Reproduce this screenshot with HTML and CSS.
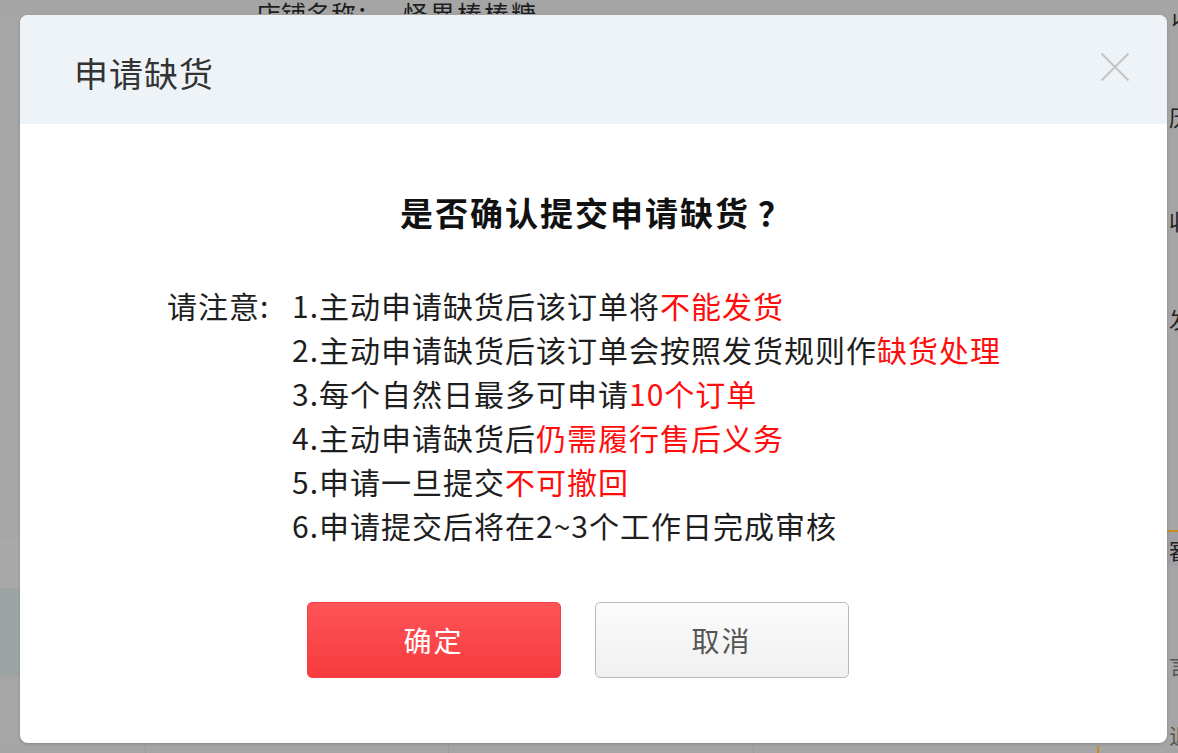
FILE: index.html
```html
<!DOCTYPE html>
<html lang="zh-CN">
<head>
<meta charset="utf-8">
<title>申请缺货</title>
<link rel="stylesheet" href="styles.css">
</head>
<body>
<div class="page">
  <div class="page-top"><span class="shop-label">店铺名称：</span><span class="shop-name">怪異棒棒糖</span></div>
  <div class="page-mid">
    <div class="side-left">
      <div class="sl-a"></div>
      <div class="sl-b"></div>
      <div class="sl-c"></div>
      <div class="sl-d"></div>
    </div>
    <div class="page-fill"></div>
    <div class="side-right">
      <div class="sr-char sr-1">订</div>
      <div class="sr-char sr-2">历</div>
      <div class="sr-char sr-3">收</div>
      <div class="sr-char sr-4">发</div>
      <div class="sr-tab">審</div>
      <div class="sr-char sr-5">言</div>
      <div class="sr-char sr-6">退</div>
    </div>
  </div>
  <div class="page-bottom">
    <div class="pb-cell pb-1"></div>
    <div class="pb-cell pb-2"></div>
    <div class="pb-cell pb-3"></div>
    <div class="pb-cell pb-4"></div>
    <div class="pb-cell pb-5"></div>
  </div>
</div>

<div class="dialog">
  <div class="dialog-header">
    <div class="dialog-title">申请缺货</div>
    <svg class="dialog-close" width="30" height="30" viewBox="0 0 30 30" aria-label="关闭">
      <line x1="1.5" y1="1.5" x2="28.5" y2="28.5" stroke="#c3c3c3" stroke-width="2"/>
      <line x1="28.5" y1="1.5" x2="1.5" y2="28.5" stroke="#c3c3c3" stroke-width="2"/>
    </svg>
  </div>
  <div class="dialog-body">
    <div class="question">是否确认提交申请缺货<span class="qmark">？</span></div>
    <div class="notes">
      <div class="notes-label">请注意:</div>
      <div class="notes-list">
        <div class="note">1.主动申请缺货后该订单将<span class="hl">不能发货</span></div>
        <div class="note">2.主动申请缺货后该订单会按照发货规则作<span class="hl">缺货处理</span></div>
        <div class="note">3.每个自然日最多可申请<span class="hl">10个订单</span></div>
        <div class="note">4.主动申请缺货后<span class="hl">仍需履行售后义务</span></div>
        <div class="note">5.申请一旦提交<span class="hl">不可撤回</span></div>
        <div class="note">6.申请提交后将在2~3个工作日完成审核</div>
      </div>
    </div>
    <div class="actions">
      <button class="btn btn-primary" type="button">确定</button>
      <button class="btn btn-default" type="button">取消</button>
    </div>
  </div>
</div>
</body>
</html>
```
FILE: styles.css
```css
* { box-sizing: border-box; }

html, body {
  margin: 0;
  padding: 0;
  width: 1178px;
  height: 753px;
  overflow: hidden;
  background: #a5a5a5;
  font-family: "Noto Sans CJK SC", "Noto Sans", sans-serif;
}

/* ---------- page behind the overlay ---------- */
.page {
  width: 1178px;
  height: 753px;
  display: flex;
  flex-direction: column;
  background: #a5a5a5;
  color: #1e1e1e;
}

.page-top {
  height: 14px;
  overflow: hidden;
  display: flex;
  align-items: flex-end;
  padding-left: 256px;
  font-size: 25px;
  line-height: 25px;
  flex-shrink: 0;
}
.page-top span { display: block; margin-bottom: -12px; }
.shop-name { margin-left: 22px; letter-spacing: 2px; }

.page-mid {
  flex: 1;
  display: flex;
}

.side-left {
  width: 20px;
  display: flex;
  flex-direction: column;
}
.sl-a { height: 524px; background: #a6a6a6; }
.sl-b { height: 50px; background: #a9a9a9; }
.sl-c { height: 89px; background: #9ca4a4; }
.sl-d { flex: 1; background: #a6a6a6; }

.page-fill { flex: 1; }

.side-right {
  width: 12px;
  overflow: hidden;
  display: flex;
  flex-direction: column;
  padding-left: 3px;
  font-size: 22px;
  line-height: 24px;
  color: #222;
}
.sr-char { height: 24px; }
.sr-1 { margin-top: -12px; }
.sr-2 { margin-top: 78px; }
.sr-3 { margin-top: 80px; }
.sr-4 { margin-top: 74px; }
.sr-tab {
  margin-top: 200px;
  margin-left: -3px;
  padding-left: 3px;
  height: 36px;
  border-top: 2px solid #c98a22;
  background: #9fa0a6;
  line-height: 34px;
}
.sr-5 { margin-top: 86px; color: #555; }
.sr-6 { margin-top: 46px; color: #555; }

.page-bottom {
  height: 10px;
  display: flex;
  flex-shrink: 0;
  background: #a5a5a5;
}
.pb-cell { border-right: 1px solid #9a9a9a; }
.pb-1 { width: 146px; }
.pb-2 { width: 303px; }
.pb-3 { width: 305px; }
.pb-4 { width: 345px; border-right: 2px solid #c98a22; }
.pb-5 { flex: 1; border-right: none; }

/* ---------- dialog ---------- */
.dialog {
  position: absolute;
  left: 20px;
  top: 15px;
  width: 1147px;
  height: 728px;
  background: #ffffff;
  border-radius: 8px;
  box-shadow: 0 1px 3px rgba(0, 0, 0, 0.18);
  display: flex;
  flex-direction: column;
  overflow: hidden;
}

.dialog-header {
  height: 109px;
  flex-shrink: 0;
  background: #eef3f8;
  display: flex;
  align-items: center;
  justify-content: space-between;
  padding: 0 37px 0 54px;
}

.dialog-title {
  font-size: 34px;
  letter-spacing: 1px;
  color: #333333;
  line-height: 40px;
  margin-top: 6px;
}

.dialog-close {
  display: block;
  margin-top: -6px;
}

.dialog-body {
  flex: 1;
  display: flex;
  flex-direction: column;
  align-items: center;
}

.question {
  margin-top: 68px;
  font-size: 33px;
  font-weight: bold;
  letter-spacing: 2px;
  line-height: 40px;
  color: #111111;
  padding-left: 6px;
}

.qmark {
  margin-left: 8px;
}

.notes {
  align-self: flex-start;
  margin-left: 147px;
  margin-top: 51px;
  display: flex;
  font-size: 30px;
  letter-spacing: 1px;
  line-height: 44px;
  color: #1e1e1e;
}

.notes-label {
  width: 125px;
  flex-shrink: 0;
}

.hl { color: #ff0d0d; }

.actions {
  margin-top: 55px;
  display: flex;
  gap: 34px;
  padding-right: 32px;
}

.btn {
  width: 254px;
  height: 76px;
  border-radius: 5px;
  font-family: "Noto Sans CJK SC", "Noto Sans", sans-serif;
  font-size: 28px;
  letter-spacing: 2px;
  cursor: pointer;
  padding: 0;
}

.btn-primary {
  color: #ffffff;
  border: 1px solid #f24144;
  background: linear-gradient(#fe5457, #f73b3e);
}

.btn-default {
  color: #555555;
  border: 1px solid #b9b9b9;
  background: linear-gradient(#fbfbfb, #f0f0f0);
}
```
